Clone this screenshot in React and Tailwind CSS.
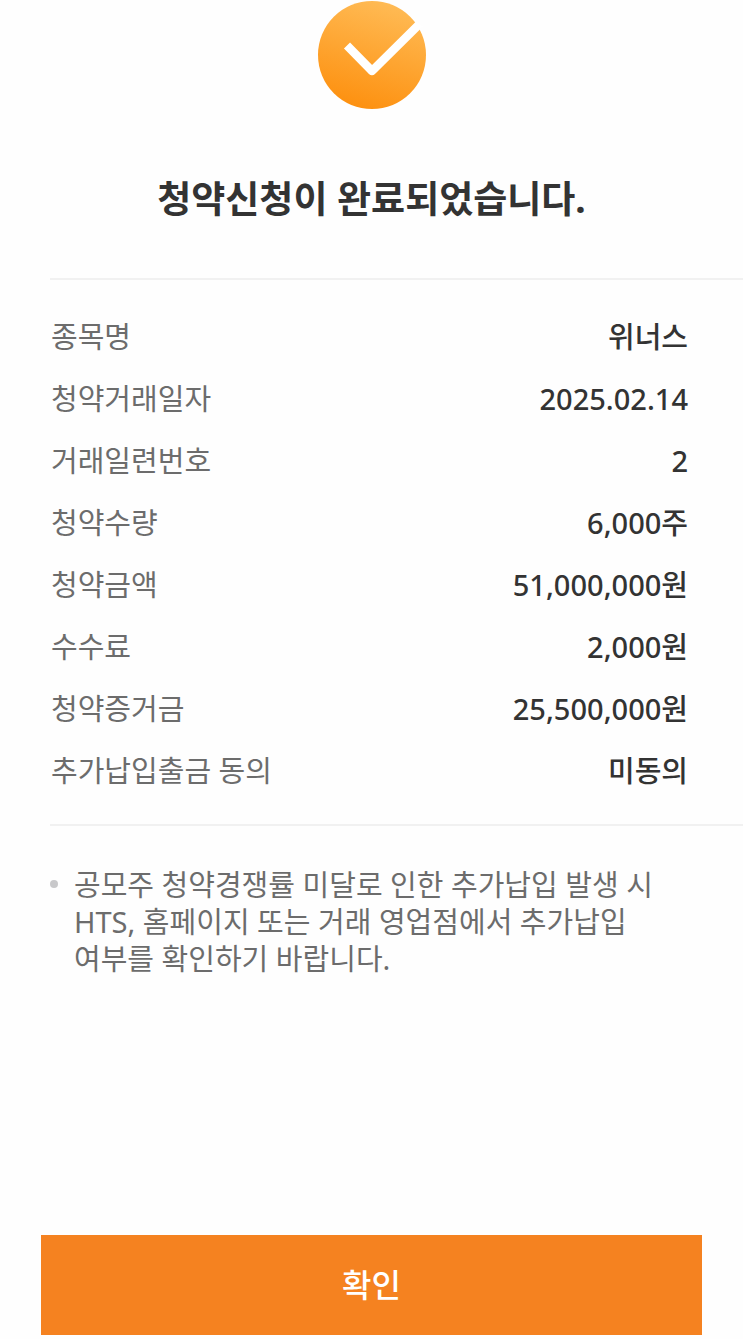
import React from 'react';

const details = [
  { label: '종목명', value: '위너스' },
  { label: '청약거래일자', value: '2025.02.14' },
  { label: '거래일련번호', value: '2' },
  { label: '청약수량', value: '6,000주' },
  { label: '청약금액', value: '51,000,000원' },
  { label: '수수료', value: '2,000원' },
  { label: '청약증거금', value: '25,500,000원' },
  { label: '추가납입출금 동의', value: '미동의' },
];

const CheckBadge = () => (
  <svg viewBox="0 0 108 108" className="w-27 h-27" aria-hidden="true">
    <defs>
      <linearGradient id="badge" x1="0.65" y1="0" x2="0.35" y2="1">
        <stop offset="0" stopColor="#ffbb55" />
        <stop offset="1" stopColor="#fd900f" />
      </linearGradient>
    </defs>
    <circle cx="54" cy="54" r="54" fill="url(#badge)" />
    <path d="M29 44.500L54 70L102 22.500" fill="none" stroke="#fff" strokeWidth="8.500" strokeLinejoin="round" />
  </svg>
);

const App = () => {
  return (
    <main className="min-h-screen bg-[#fefefe] font-['Noto_Sans','Noto_Sans_CJK_KR',sans-serif] text-[#333]">
      <div className="flex justify-center pt-px">
        <CheckBadge />
      </div>

      <h1 className="mt-[66px] text-center text-[37px] leading-12 font-bold">
        청약신청이 완료되었습니다.
      </h1>

      <section className="mt-[55px] ml-[50px] border-y-2 border-[#f1f1f1] pt-[26px] pb-[22px]">
        <dl className="pr-[55px] pl-px text-[29px]">
          {details.map(item => (
            <div key={item.label} className="flex h-[62px] items-center justify-between">
              <dt className="text-[#6c6c6c]">{item.label}</dt>
              <dd className="font-medium">{item.value}</dd>
            </div>
          ))}
        </dl>
      </section>

      <ul className="mt-10 mr-14 ml-[50px]">
        <li className="flex gap-4 text-[29px] leading-[37px] text-[#6c6c6c]">
          <span className="mt-3.5 h-2 w-2 shrink-0 rounded-full bg-[#c8c8ca]" />
          <p>
            공모주 청약경쟁률 미달로 인한 추가납입 발생 시<br />
            HTS, 홈페이지 또는 거래 영업점에서 추가납입<br />
            여부를 확인하기 바랍니다.
          </p>
        </li>
      </ul>

      <div className="mt-[258px] px-[41px] pb-1">
        <button className="h-[100px] w-full bg-[#f58220] text-[32px] font-medium text-white">
          확인
        </button>
      </div>
    </main>
  );
};

export default App;
